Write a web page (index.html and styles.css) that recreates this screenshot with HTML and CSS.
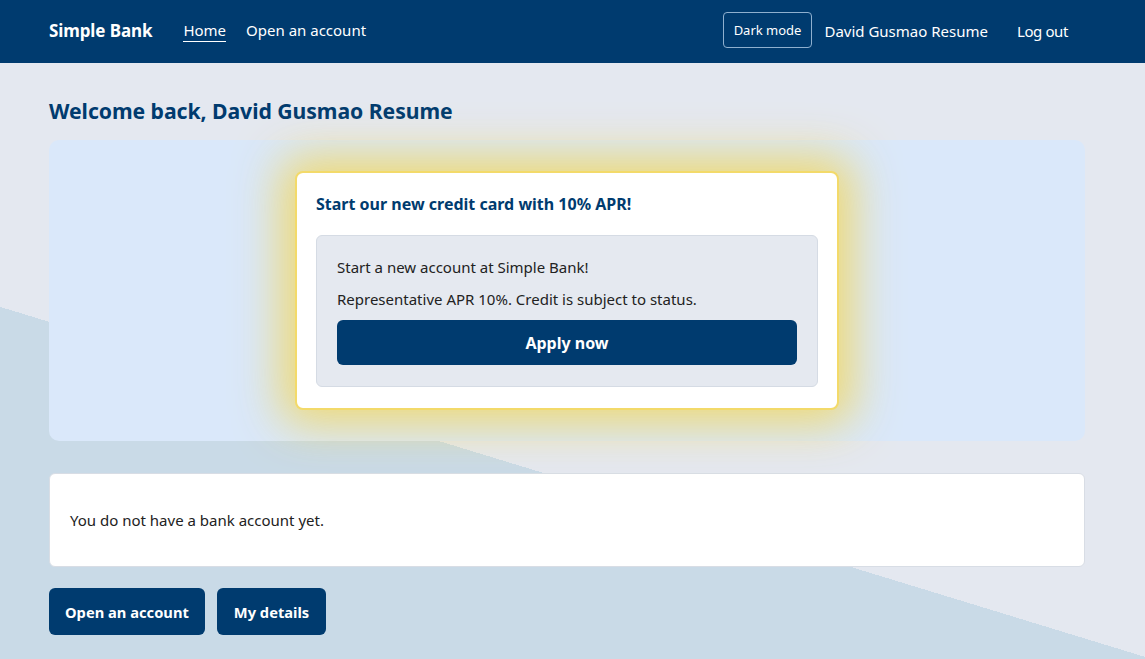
FILE: index.html
```html
<!DOCTYPE html>
<html lang="en">
<head>
<meta charset="utf-8">
<title>Simple Bank</title>
<link rel="stylesheet" href="styles.css">
</head>
<body>
<header class="navbar">
  <div class="nav-inner">
    <a class="brand" href="#">Simple Bank</a>
    <nav class="nav-links">
      <a class="nav-link active" href="#">Home</a>
      <a class="nav-link" href="#">Open an account</a>
    </nav>
    <div class="nav-right">
      <button class="mode-btn" type="button">Dark mode</button>
      <a class="nav-link user" href="#">David Gusmao Resume</a>
      <a class="nav-link logout" href="#">Log out</a>
    </div>
  </div>
</header>
<main class="main">
  <h1 class="welcome">Welcome back, David Gusmao Resume</h1>
  <section class="promo">
    <div class="promo-card">
      <h2 class="promo-title">Start our new credit card with 10% APR!</h2>
      <div class="promo-body">
        <p class="promo-text">Start a new account at Simple Bank!</p>
        <p class="promo-text">Representative APR 10%. Credit is subject to status.</p>
        <button class="btn btn-block" type="button">Apply now</button>
      </div>
    </div>
  </section>
  <section class="account-box">
    <p class="account-text">You do not have a bank account yet.</p>
  </section>
  <div class="actions">
    <button class="btn" type="button">Open an account</button>
    <button class="btn" type="button">My details</button>
  </div>
</main>
</body>
</html>
```
FILE: styles.css
```css
html {
  min-height: 100%;
  background: linear-gradient(197deg, #e4e8f0 0%, #e4e8f0 65.1%, #c9dae7 65.1%, #c9dae7 100%);
  background-attachment: fixed;
}
body {
  margin: 0;
  font-family: "Segoe UI", "Noto Sans", "Open Sans", sans-serif;
  color: #222;
}
.navbar {
  background: #003b6f;
  height: 63px;
}
.nav-inner {
  height: 100%;
  width: 1036px;
  padding-left: 49px;
  display: flex;
  align-items: center;
}
.brand {
  color: #fff;
  font-weight: 700;
  font-size: 17px;
  letter-spacing: -0.1px;
  text-decoration: none;
  margin-right: 31px;
  margin-top: -2px;
}
.nav-links {
  display: flex;
  gap: 20px;
  margin-top: -2px;
}
.nav-link {
  color: #fff;
  font-size: 15px;
  text-decoration: none;
  line-height: 22px;
}
.nav-link.active {
  border-bottom: 1px solid #fff;
}
.nav-right {
  margin-left: auto;
  display: flex;
  align-items: center;
  margin-top: -2px;
}
.mode-btn {
  background: transparent;
  color: #fff;
  border: 1px solid #8fb0cf;
  border-radius: 4px;
  font-family: inherit;
  font-size: 13px;
  height: 36px;
  padding: 0 10px;
  margin-right: 12px;
  margin-top: -2px;
}
.user {
  margin-right: 29px;
}
.logout {
  margin-right: 17px;
  letter-spacing: -0.4px;
}
.main {
  width: 1036px;
  padding-left: 49px;
  padding-top: 34px;
}
.welcome {
  margin: 0 0 15px;
  font-size: 21.2px;
  font-weight: 700;
  color: #003b6f;
  line-height: 28px;
  letter-spacing: -0.05px;
}
.promo {
  background: #dae8fa;
  border-radius: 10px;
  height: 301px;
  display: flex;
  justify-content: center;
  align-items: flex-start;
  padding-top: 31px;
  box-sizing: border-box;
}
.promo-card {
  width: 544px;
  box-sizing: border-box;
  background: #fff;
  border: 2px solid #f3da6a;
  border-radius: 8px;
  padding: 19px 19px 21px;
  box-shadow: 0 0 46px 14px rgba(242, 214, 90, 0.85);
}
.promo-title {
  margin: 0 0 19px;
  font-size: 16px;
  font-weight: 700;
  color: #003b6f;
  line-height: 24px;
}
.promo-body {
  background: #e5e9f0;
  border: 1px solid #d5dbe4;
  border-radius: 6px;
  padding: 20px 20px 21px;
}
.promo-text {
  margin: 0 0 10px;
  font-size: 15px;
  line-height: 22px;
  color: #222;
}
.btn {
  background: #003b6f;
  color: #fff;
  border: 0;
  border-radius: 6px;
  font-family: inherit;
  font-weight: 700;
  font-size: 14.7px;
  height: 47px;
  padding: 0 16px;
}
.btn + .btn {
  padding: 0 17px;
}
.btn-block {
  display: block;
  width: 100%;
  height: 45px;
  font-size: 16px;
  margin-top: 0;
}
.account-box {
  margin-top: 32px;
  background: #fff;
  border: 1px solid #d8dde5;
  border-radius: 6px;
  height: 94px;
  box-sizing: border-box;
  display: flex;
  align-items: center;
  padding: 0 20px;
}
.account-text {
  margin: 0;
  font-size: 15px;
  color: #222;
}
.actions {
  margin-top: 21px;
  display: flex;
  gap: 12px;
}
```
